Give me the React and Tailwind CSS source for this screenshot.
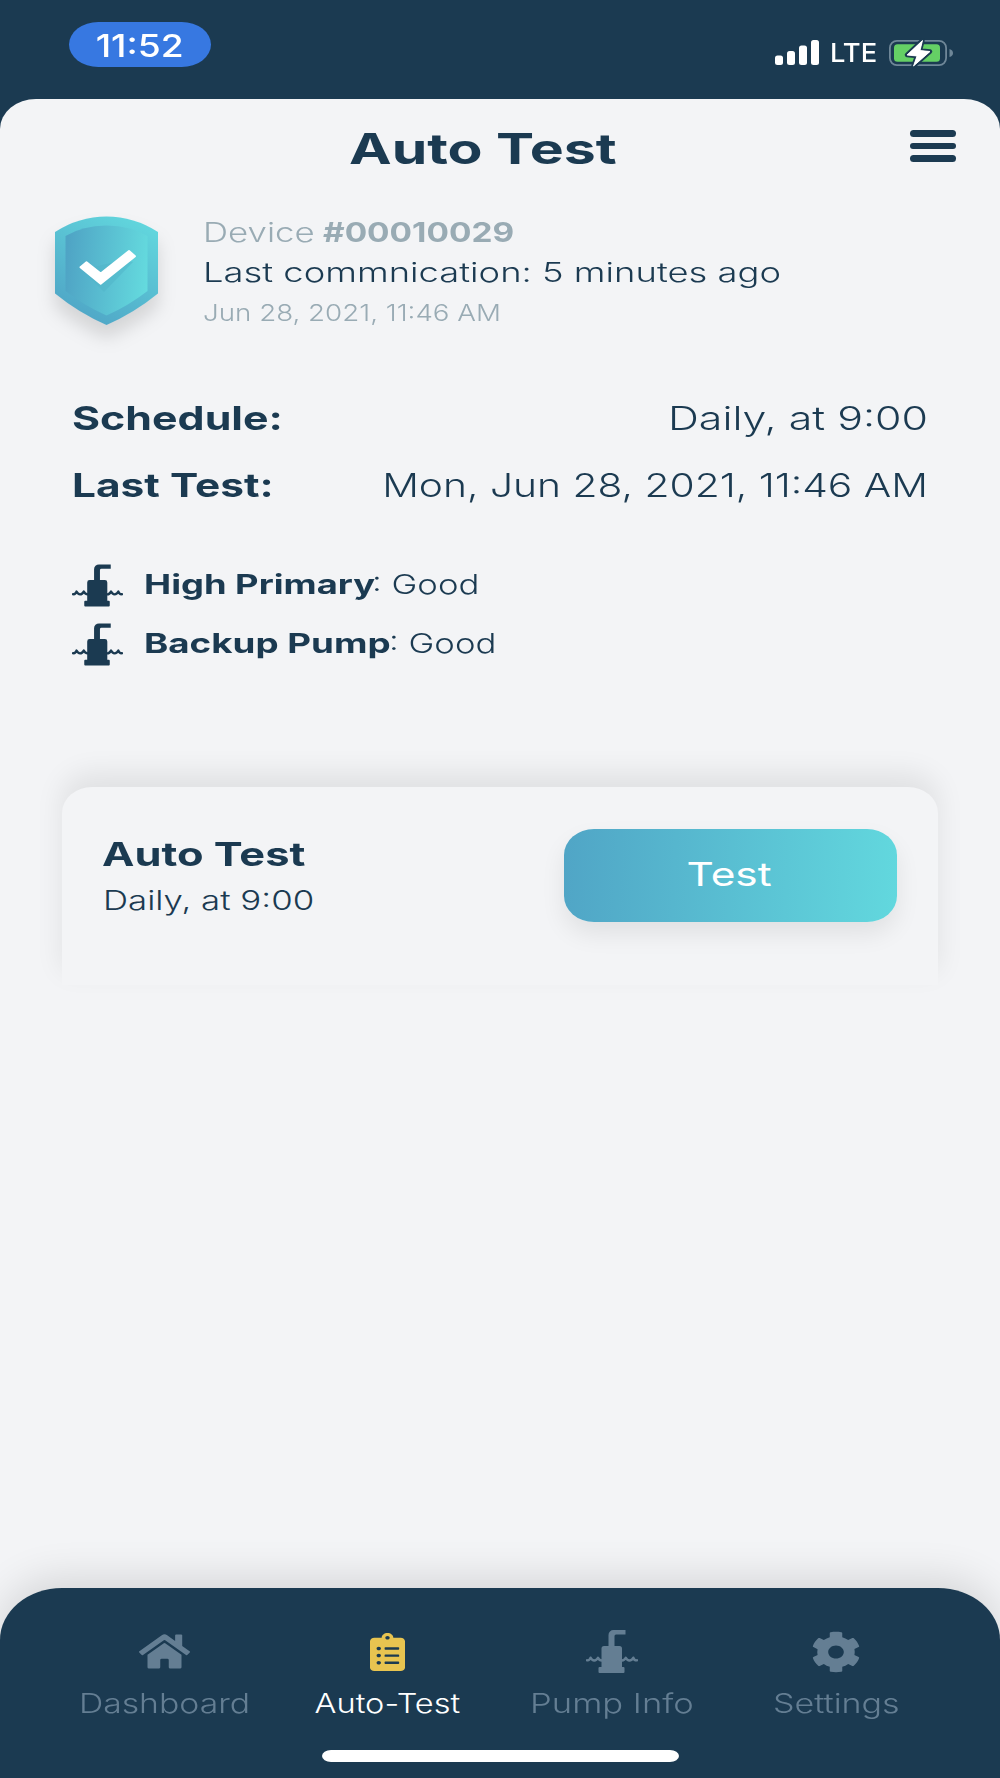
import React, { useState } from "react";
import { FaHome, FaClipboardList, FaCog } from "react-icons/fa";

const PumpIcon = ({ className }) => (
  <svg viewBox="0 0 52 43" className={className} fill="currentColor">
    <path d="M22.500 17V5a5 5 0 0 1 5-5H39.500v4.500H30a1.500 1.500 0 0 0-1.500 1.500v11z" />
    <path d="M18 16h15.500a2.500 2.500 0 0 1 2.500 2.500V37h1.500a1 1 0 0 1 1 1v4a1 1 0 0 1-1 1H13.500a1 1 0 0 1-1-1v-4a1 1 0 0 1 1-1h2V18.500A2.500 2.500 0 0 1 18 16z" />
    <path
      d="M1 30.300Q3.500 30.800 4.600 27.700Q6 30.500 8.200 30.500Q10.500 30.500 12 27.700Q13.200 30.500 16 30.500M36 30.500Q38.300 30.500 39.800 27.700Q41.200 30.500 43.300 30.500Q46 30.500 47.300 27.700Q48.500 30.800 51 30.300"
      fill="none"
      stroke="currentColor"
      strokeWidth="2.400"
      strokeLinecap="round"
      strokeLinejoin="round"
    />
  </svg>
);

const ShieldIcon = () => (
  <svg
    viewBox="0 0 103 109"
    className="h-[109px] w-[103px] overflow-visible drop-shadow-[0_13px_9px_rgba(0,0,0,0.13)]"
  >
    <defs>
      <linearGradient id="shieldOuter" x1="0.85" y1="0" x2="0.3" y2="1">
        <stop offset="0" stopColor="#62d8de" />
        <stop offset="1" stopColor="#4fa5c6" />
      </linearGradient>
      <linearGradient id="shieldInner" x1="0" y1="0.45" x2="1" y2="0.55">
        <stop offset="0" stopColor="#4fa4c5" />
        <stop offset="1" stopColor="#64dade" />
      </linearGradient>
    </defs>
    <path d="M0 16Q24 0.500 51.500 0.500T103 16V77.500Q79 97 51.500 109Q24 97 0 77.500Z" fill="url(#shieldOuter)" />
    <path d="M10.500 20Q28 9.500 51.500 9.500T92.500 20V75Q73 90 51.500 99.500Q30 90 10.500 75Z" fill="url(#shieldInner)" />
    <path d="M27 54L49 76L78 46L68 44Z" fill="#4fb3c8" opacity="0.5" />
    <path
      d="M25.500 51.200L31.500 46.200L45.700 57.500L74 35L80 40.200L45.700 67.800Z"
      fill="#fff"
      stroke="#fff"
      strokeWidth="2"
      strokeLinejoin="round"
    />
  </svg>
);

const StatusBar = () => (
  <div className="flex h-[99px] shrink-0 items-start justify-between pt-[22px] pr-[47px] pl-[69px] text-white">
    <div className="flex h-[45px] w-[142px] items-center justify-center rounded-[30px_/_23px] bg-[#3778e1]">
      <span className="mt-px scale-x-[1.2] text-[31px] leading-none font-medium">11:52</span>
    </div>

    <div className="flex items-center pt-[16px]">
      {/* Signal */}
      <svg viewBox="0 0 44 25" className="h-[25px] w-[44px]" fill="#fff">
        <rect x="0" y="15.500" width="8" height="9.500" rx="2.500" />
        <rect x="12" y="11" width="8" height="14" rx="2.500" />
        <rect x="24" y="5.500" width="8" height="19.500" rx="2.500" />
        <rect x="36" y="0" width="8" height="25" rx="2.500" />
      </svg>
      <span className="ml-[11px] w-[47px] origin-left scale-x-[1.05] text-[26px] leading-[29px] font-medium">LTE</span>
      {/* Battery */}
      <svg viewBox="0 0 64 26" className="ml-[12px] h-[26px] w-[64px] overflow-visible">
        <rect x="0.900" y="0.900" width="56.200" height="24.200" rx="7" fill="none" stroke="#6f8798" strokeWidth="1.800" />
        <rect x="5" y="4.200" width="46" height="17.600" rx="3.500" fill="#65d065" />
        <path d="M60.500 9Q64 10 64 13T60.500 17Z" fill="#6f8798" />
        <path
          d="M33.500 0.500L18 15L28 16L24.500 26L41 11.500L31 10.500Z"
          fill="#fff"
          stroke="#1b3a51"
          strokeWidth="4.500"
          strokeLinejoin="round"
          paintOrder="stroke"
        />
        <path d="M33.500 0.500L18 15L28 16L24.500 26L41 11.500L31 10.500Z" fill="#fff" stroke="#fff" strokeWidth="0.800" strokeLinejoin="round" />
      </svg>
    </div>
  </div>
);

const tabs = [
  { name: "Dashboard", Icon: FaHome, size: "h-[39px] w-[51px]", label: "scale-x-[1.25]" },
  { name: "Auto-Test", Icon: FaClipboardList, size: "mr-[2px] h-[38px] w-[35px]", label: "-translate-x-[1px] scale-x-[1.205]" },
  { name: "Pump Info", Icon: PumpIcon, size: "h-[43px] w-[52px]", label: "scale-x-[1.28]" },
  { name: "Settings", Icon: FaCog, size: "h-[42px] w-[50px]", label: "scale-x-[1.26]" },
];

const App = () => {
  const [tab, setTab] = useState("Auto-Test");

  return (
    <div className="flex h-[1778px] w-[1000px] flex-col overflow-hidden bg-[#1b3a51] font-['Inter',sans-serif] whitespace-nowrap text-[#1b3a51]">
      <StatusBar />

      <main className="flex flex-1 flex-col overflow-hidden rounded-t-[36px_30px] bg-[#f3f4f6]">
        {/* Header */}
        <header className="flex h-[100px] items-center justify-between pr-[44px] pl-[349px]">
          <h1 className="origin-left scale-x-[1.36] text-[42px] leading-none font-bold">Auto Test</h1>
          <button className="-mt-[6px] flex w-[46px] flex-col gap-[6px]">
            <span className="h-[6.500px] rounded-full bg-[#1b3a51]" />
            <span className="h-[6.500px] rounded-full bg-[#1b3a51]" />
            <span className="h-[6.500px] rounded-full bg-[#1b3a51]" />
          </button>
        </header>

        {/* Device */}
        <section className="flex gap-[45px] pt-[14px] pl-[55px]">
          <div className="pt-[3px]">
            <ShieldIcon />
          </div>
          <div className="h-[120px] text-[27px] leading-[40px]">
            <div className="flex text-[#99abb4]">
              <span className="w-[120px] origin-left scale-x-[1.29] font-light">Device</span>
              <span className="origin-left scale-x-[1.235] font-bold">#00010029</span>
            </div>
            <p className="w-0 origin-left scale-x-[1.347] font-light">Last commnication: 5 minutes ago</p>
            <p className="w-0 origin-left scale-x-[1.205] text-[23px] font-light text-[#99abb4]">Jun 28, 2021, 11:46 AM</p>
          </div>
        </section>

        {/* Schedule */}
        <section className="mt-[52px] pr-[72px] pl-[72px] text-[33px] leading-[67px]">
          <div className="flex justify-between">
            <span className="origin-left scale-x-[1.3] font-bold">Schedule:</span>
            <span className="origin-right scale-x-[1.3] font-light">Daily, at 9:00</span>
          </div>
          <div className="flex justify-between">
            <span className="origin-left scale-x-[1.285] font-bold">Last Test:</span>
            <span className="origin-right scale-x-[1.235] font-light">Mon, Jun 28, 2021, 11:46 AM</span>
          </div>
        </section>

        {/* Pumps */}
        <section className="mt-[36px] pl-[72px] text-[27px] leading-[59px]">
          <div className="flex items-center">
            <PumpIcon className="mt-[2px] h-[43px] w-[51px]" />
            <span className="ml-[21px] w-[228px] origin-left scale-x-[1.345] font-bold">High Primary</span>
            <span className="origin-left scale-x-[1.285] font-light">: Good</span>
          </div>
          <div className="flex items-center">
            <PumpIcon className="mt-[2px] h-[43px] w-[51px]" />
            <span className="ml-[21px] w-[245px] origin-left scale-x-[1.36] font-bold">Backup Pump</span>
            <span className="origin-left scale-x-[1.285] font-light">: Good</span>
          </div>
        </section>

        {/* Auto test card */}
        <section className="mx-[62px] mt-[114px] flex h-[198px] shrink-0 items-start justify-between rounded-t-[30px_26px] bg-[#f3f4f6] pt-[42px] pr-[41px] pl-[40px] shadow-[0_-14px_28px_rgba(0,0,0,0.08)]">
          <div className="pt-[2px] leading-[46.500px]">
            <h2 className="origin-left scale-x-[1.315] text-[33px] font-bold">Auto Test</h2>
            <p className="origin-left translate-x-[1px] scale-x-[1.29] text-[27px] font-light">Daily, at 9:00</p>
          </div>
          <button className="h-[93px] w-[333px] rounded-[30px_/_26px] bg-[linear-gradient(93deg,#50a5c6,#62d8de)] text-[33px] leading-none text-white shadow-[0_12px_24px_rgba(0,0,0,0.08)]">
            <span className="inline-block -translate-x-[1px] -translate-y-[1px] scale-x-[1.285]">Test</span>
          </button>
        </section>

        {/* Bottom tabs */}
        <nav className="mt-auto h-[190px] shrink-0 rounded-t-[62px_52px] bg-[#1b3a51] px-[52px] shadow-[0_-10px_40px_rgba(0,0,0,0.12)]">
          <div className="flex h-[162px] pt-[42px]">
            {tabs.map(({ name, Icon, size, label }) => {
              const active = tab === name;
              return (
                <button key={name} onClick={() => setTab(name)} className="flex w-[224px] flex-col items-center">
                  <span className={`flex h-[43px] items-center ${active ? "text-[#e8c450]" : "text-[#647e93]"}`}>
                    <Icon className={size} preserveAspectRatio="none" />
                  </span>
                  <span
                    className={`mt-[11px] text-[27px] leading-[40px] font-light ${label} ${active ? "text-white" : "text-[#647e93]"}`}
                  >
                    {name}
                  </span>
                </button>
              );
            })}
          </div>
          <div className="mx-auto h-[12px] w-[357px] rounded-[9px_/_6px] bg-white" />
        </nav>
      </main>
    </div>
  );
};

export default App;
